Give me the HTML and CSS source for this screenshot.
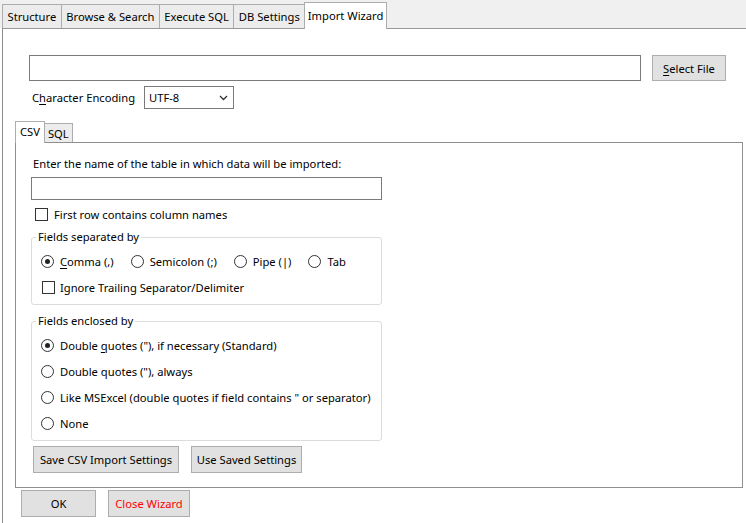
FILE: index.html
```html
<!DOCTYPE html>
<html>
<head>
<meta charset="utf-8">
<link rel="stylesheet" href="styles.css">
</head>
<body>
<div class="window">
  <div class="tabbar">
    <div class="tab">Structure</div>
    <div class="tab">Browse &amp; Search</div>
    <div class="tab">Execute SQL</div>
    <div class="tab">DB Settings</div>
    <div class="tab active">Import Wizard</div>
  </div>
  <div class="pane">
    <div class="file-row">
      <div class="textbox file-box"></div>
      <div class="btn select-btn"><span><u>S</u>elect File</span></div>
    </div>
    <div class="enc-row">
      <span class="enc-label">C<u>h</u>aracter Encoding</span>
      <div class="combo">
        <span>UTF-8</span>
        <svg class="chev" width="9" height="6" viewBox="0 0 9 6"><path d="M1 1 L4.5 4.5 L8 1" fill="none" stroke="#333" stroke-width="1.3"/></svg>
      </div>
    </div>
    <div class="subtabs">
      <div class="subtab active">CSV</div>
      <div class="subtab">SQL</div>
    </div>
    <div class="inner">
      <div class="label">Enter the name of the table in which data will be imported:</div>
      <div class="textbox table-box"></div>
      <div class="check-row first-row"><span class="checkbox"></span><span>First row contains column names</span></div>
      <fieldset class="group first">
        <legend>Fields separated by</legend>
        <div class="row radio-line">
          <span class="opt"><span class="radio checked"></span><span><u>C</u>omma (,)</span></span>
          <span class="opt"><span class="radio"></span><span>Semicolon (;)</span></span>
          <span class="opt"><span class="radio"></span><span>Pipe (|)</span></span>
          <span class="opt"><span class="radio"></span><span>Tab</span></span>
        </div>
        <div class="row"><span class="checkbox"></span><span>Ignore Trailing Separator/Delimiter</span></div>
      </fieldset>
      <fieldset class="group second">
        <legend>Fields enclosed by</legend>
        <div class="row"><span class="radio checked"></span><span>Double <u>q</u>uotes ("), if necessary (Standard)</span></div>
        <div class="row"><span class="radio"></span><span>Double quotes ("), always</span></div>
        <div class="row"><span class="radio"></span><span>Like MSExcel (double quotes if field contains " or separator)</span></div>
        <div class="row"><span class="radio"></span><span>None</span></div>
      </fieldset>
      <div class="btn-row">
        <div class="btn save-btn">Save CSV Import Settings</div>
        <div class="btn use-btn">Use Saved Settings</div>
      </div>
    </div>
    <div class="bottom-row">
      <div class="btn ok-btn">OK</div>
      <div class="btn close-btn">Close Wizard</div>
    </div>
  </div>
</div>
</body>
</html>
```

FILE: styles.css
```css
* { box-sizing: border-box; }
html, body { margin: 0; padding: 0; background: #ffffff; }
body {
  font-family: "Noto Sans", "Liberation Sans", sans-serif;
  font-size: 11.2px;
  color: #000;
  width: 746px;
  height: 523px;
  overflow: hidden;
}
u { text-decoration: underline; text-underline-offset: 2px; }

.tabbar {
  display: flex;
  align-items: flex-end;
  height: 28px;
  padding-left: 2px;
  background: #f0f0f0;
}
.tab {
  height: 24px;
  padding: 0 4.5px;
  display: flex;
  align-items: center;
  background: #ececec;
  border: 1px solid #adadad;
  border-bottom: none;
  margin-left: -1px;
  white-space: nowrap;
}
.tab:first-child { margin-left: 0; }
.tab.active {
  height: 27px;
  margin-bottom: -1px;
  background: #fff;
  padding: 0 2.5px 2px;
  position: relative;
  z-index: 1;
}

.pane {
  margin-left: 2px;
  border-top: 1px solid #9a9a9a;
  border-left: 1px solid #8c8c8c;
  padding: 26px 0 0 12px;
  height: 495px;
}
.file-row {
  display: flex;
  gap: 11px;
  margin-left: 14px;
}
.textbox {
  border: 1px solid #7a7a7a;
  background: #fff;
}
.file-box { width: 612px; height: 26px; }
.btn {
  height: 27px;
  display: flex;
  align-items: center;
  justify-content: center;
  background: #e1e1e1;
  border: 1px solid #adadad;
  white-space: nowrap;
}
.select-btn { width: 74px; height: 26px; }

.enc-row {
  display: flex;
  align-items: center;
  margin: 5px 0 0 17px;
  gap: 9px;
}
.combo {
  width: 90px;
  height: 23px;
  border: 1px solid #7a7a7a;
  display: flex;
  align-items: center;
  justify-content: space-between;
  padding: 0 5px 0 4px;
}

.subtabs {
  display: flex;
  align-items: flex-end;
  height: 21px;
  margin-top: 12px;
}
.subtab {
  height: 19px;
  padding: 0 3px;
  display: flex;
  align-items: center;
  background: #ececec;
  border: 1px solid #adadad;
  border-bottom: none;
  margin-left: -1px;
}
.subtab.active {
  margin-left: 0;
  height: 22px;
  margin-bottom: -1px;
  background: #fff;
  padding: 0 4px 2px;
  position: relative;
  z-index: 1;
}

.inner {
  width: 728px;
  border: 1px solid #8f8f8f;
  padding: 13px 0 14px 15px;
}
.label { line-height: 16px; margin-left: 2px; }
.table-box { width: 351px; height: 23px; margin-top: 5px; }

.check-row, .row, .opt {
  display: flex;
  align-items: center;
}
.first-row { height: 16px; margin: 6px 0 0 4px; }
.checkbox {
  width: 13px;
  height: 13px;
  border: 1px solid #333;
  background: #fff;
  margin-right: 6px;
  flex: none;
}
.radio {
  width: 13px;
  height: 13px;
  border: 1px solid #333;
  border-radius: 50%;
  background: #fff;
  margin-right: 6px;
  flex: none;
  display: flex;
  align-items: center;
  justify-content: center;
}
.radio.checked::after {
  content: "";
  width: 5px;
  height: 5px;
  border-radius: 50%;
  background: #222;
}

.group {
  width: 351px;
  margin: 7px 0 0;
  border: 1px solid #dcdcdc;
  border-radius: 3px;
  padding: 3px 8px 4px 9px;
  min-width: 0;
}
.group.second { padding-bottom: 4px; margin-top: 8px; }
.group legend {
  line-height: 16px;
  padding: 0 2px;
  margin-left: -5px;
}
.row { height: 26px; }
.radio-line { gap: 17px; }
.group .row > .checkbox { margin-left: 1px; margin-right: 5px; }

.btn-row {
  display: flex;
  gap: 12px;
  margin: 5px 0 0 2px;
}
.save-btn { width: 146px; }
.use-btn { width: 111px; }

.bottom-row {
  display: flex;
  gap: 12px;
  margin: 2px 0 0 6px;
}
.ok-btn { width: 75px; }
.close-btn { width: 82px; color: #ff0000; }
```
